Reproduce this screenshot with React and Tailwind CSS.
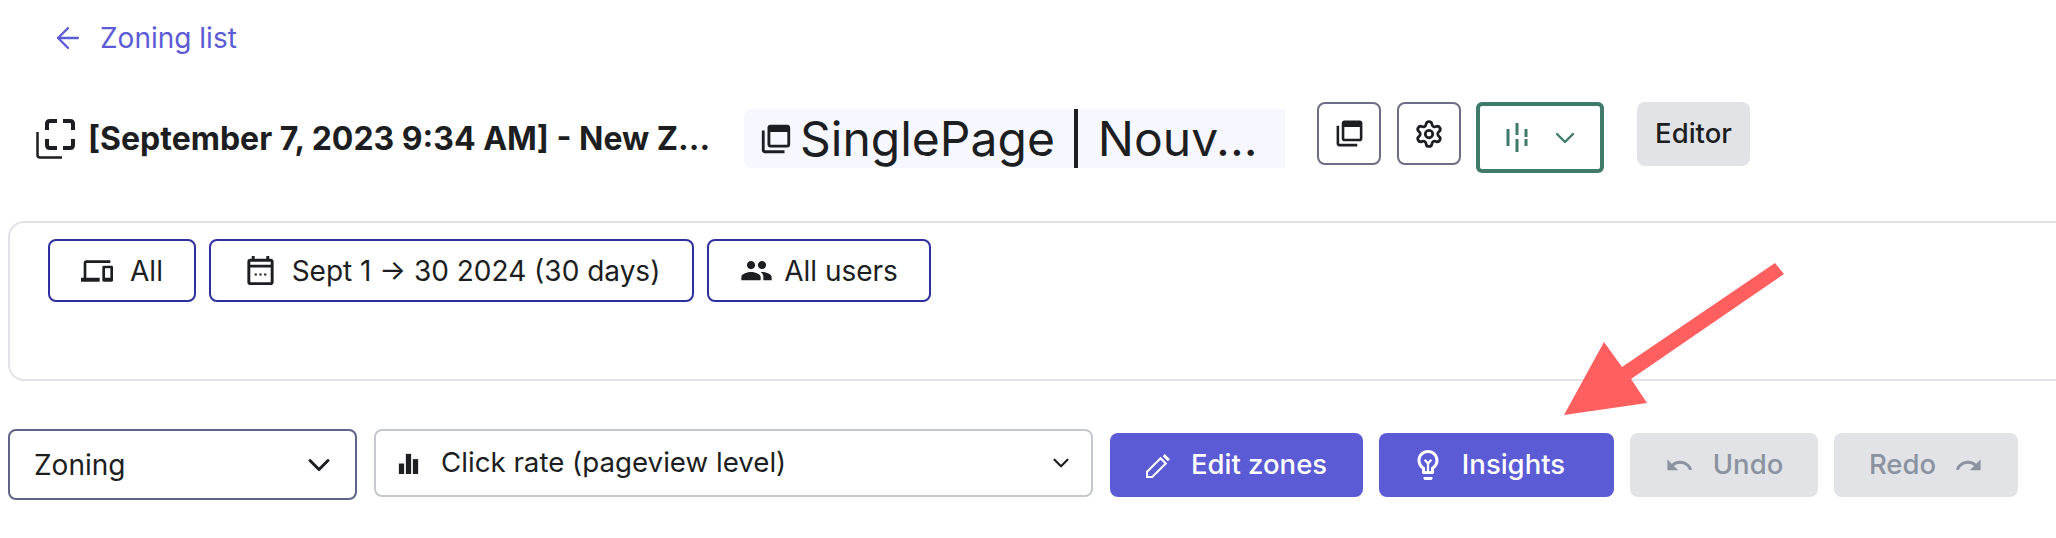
import React from "react";
import { ArrowLeft, ChevronDown, Settings } from "lucide-react";

const Layers = ({ className }) => (
  <svg viewBox="0 0 24 24" fill="currentColor" className={className}>
    <path d="M4 6H2v14c0 1.100.9 2 2 2h14v-2H4V6z" />
    <path fillRule="evenodd" d="M20 2H8c-1.100 0-2 .9-2 2v12c0 1.100.9 2 2 2h12c1.100 0 2-.9 2-2V4c0-1.100-.9-2-2-2zm0 14H8V7h12v9z" />
  </svg>
);

const ZoneIcon = ({ className }) => (
  <svg viewBox="0 0 40 40" fill="none" stroke="currentColor" className={className}>
    <path d="M11 11V5q0-3 3-3h7M27 2h7q3 0 3 3v6M37 20v6q0 3-3 3h-7M21 29h-7q-3 0-3-3v-6" strokeWidth="4" />
    <path d="M1.500 13v23q0 2.500 2.500 2.500h22" strokeWidth="2.500" />
  </svg>
);

const Device = ({ className }) => (
  <svg viewBox="0 0 24 24" fill="currentColor" className={className}>
    <path d="M4 6h18V4H4c-1.100 0-2 .9-2 2v11H0v3h14v-3H4V6zm19 2h-6c-.55 0-1 .45-1 1v10c0 .55.45 1 1 1h6c.55 0 1-.45 1-1V9c0-.55-.45-1-1-1zm-1 9h-4v-7h4v7z" />
  </svg>
);

const Calendar = ({ className }) => (
  <svg viewBox="0 0 24 24" fill="currentColor" className={className}>
    <path d="M19 4h-1V2h-2v2H8V2H6v2H5c-1.100 0-2 .9-2 2v14c0 1.100.9 2 2 2h14c1.100 0 2-.9 2-2V6c0-1.100-.9-2-2-2zm0 16H5V10h14v10zM5 8V6h14v2H5z" />
    <path d="M8 14h1.500v1.500H8zM11.250 14h1.500v1.500h-1.500zM14.500 14H16v1.500h-1.500z" />
  </svg>
);

const People = ({ className }) => (
  <svg viewBox="0 0 24 24" fill="currentColor" className={className}>
    <path d="M16 11c1.660 0 2.990-1.340 2.990-3S17.660 5 16 5s-3 1.340-3 3 1.340 3 3 3zm-8 0c1.660 0 2.990-1.340 2.990-3S9.660 5 8 5 5 6.340 5 8s1.340 3 3 3zm0 2c-2.330 0-7 1.170-7 3.500V19h14v-2.500C15 14.170 10.330 13 8 13zm8 0c-.29 0-.62.020-.97.050 1.160.84 1.970 1.970 1.970 3.450V19h6v-2.500c0-2.330-4.670-3.500-7-3.500z" />
  </svg>
);

const Bars = ({ className }) => (
  <svg viewBox="0 0 24 24" fill="currentColor" className={className}>
    <rect x="1" y="12" width="6" height="12" />
    <rect x="9" y="1" width="6" height="23" />
    <rect x="17" y="7" width="6" height="17" />
  </svg>
);

const Pulse = ({ className }) => (
  <svg viewBox="0 0 22 29" fill="none" stroke="currentColor" strokeWidth="3" className={className}>
    <path d="M2 6v17M11 0v12M11 16v13M20 6v8M20 16v7" />
  </svg>
);

const PencilIcon = ({ className }) => (
  <svg viewBox="0 0 24 24" className={className}>
    <path d="M1 23v-5L14 5l5 5L6 23H1z" fill="none" stroke="currentColor" strokeWidth="2" />
    <path d="M16 3l2-2 5 5-2 2z" fill="currentColor" />
  </svg>
);

const Bulb = ({ className }) => (
  <svg viewBox="0 0 24 24" className={className}>
    <path fill="currentColor" d="M9 21c0 .5.4 1 1 1h4c.6 0 1-.5 1-1v-1H9v1zm3-19C8.100 2 5 5.100 5 9c0 2.400 1.200 4.500 3 5.700V17c0 .5.4 1 1 1h6c.6 0 1-.5 1-1v-2.300c1.800-1.300 3-3.400 3-5.700 0-3.900-3.100-7-7-7zm2 11.700V16h-4v-2.300C8.500 12.700 7 11.200 7 9c0-2.800 2.200-5 5-5s5 2.200 5 5c0 2.200-1.500 3.700-3 4.700z" />
    <path fill="none" stroke="currentColor" strokeWidth="1.500" d="M9.800 8.500L12 11l2.200-2.500M12 11v5" />
  </svg>
);

const UndoIcon = ({ className }) => (
  <svg viewBox="0 0 24 24" fill="currentColor" className={className}>
    <path d="M12.500 8c-2.650 0-5.050.99-6.900 2.600L2 7v9h9l-3.620-3.620c1.390-1.160 3.160-1.880 5.120-1.880 3.540 0 6.550 2.310 7.600 5.500l2.370-.78C21.080 11.030 17.150 8 12.500 8z" />
  </svg>
);

const RedoIcon = ({ className }) => (
  <svg viewBox="0 0 24 24" fill="currentColor" className={className}>
    <path d="M18.400 10.600C16.550 8.990 14.150 8 11.500 8c-4.650 0-8.580 3.030-9.960 7.220L3.900 16c1.050-3.190 4.050-5.500 7.600-5.500 1.950 0 3.730.72 5.120 1.880L13 16h9V7l-3.600 3.600z" />
  </svg>
);

const Pill = ({ icon, children, className }) => (
  <button className={`flex h-[63px] items-center justify-center rounded-[8px] border-2 border-[#2f2f9f] bg-white text-[28px] text-[#1c1e21] ${className}`}>
    {icon}
    {children}
  </button>
);

const Solid = ({ icon, children, className }) => (
  <button className={`flex h-[64px] items-center justify-center rounded-[8px] text-[27.5px] font-medium ${className}`}>
    {icon}
    {children}
  </button>
);

export default function App() {
  return (
    <div className="relative h-[538px] w-full overflow-hidden bg-white font-['Inter',sans-serif] text-[#1c1e21]">
      <a className="mt-[18px] ml-[51px] flex h-[40px] items-center text-[28px] text-[#5b5bd6]">
        <ArrowLeft className="mr-[15px] size-[34px]" strokeWidth={1.600} />
        Zoning list
      </a>

      <div className="mt-[51px] ml-[36px] flex items-start">
        <div className="mt-[10px] flex items-center">
          <ZoneIcon className="size-[40px] shrink-0" />
          <h1 className="ml-[12px] w-[656px] text-[32px] leading-[36px] font-bold whitespace-nowrap">[September 7, 2023 9:34 AM] - New Z...</h1>
        </div>
        <div className="flex h-[59px] w-[541px] items-center rounded-l-[8px] bg-[#f7f7ff] pl-[15px]">
          <Layers className="size-[34px] shrink-0" />
          <span className="ml-[7px] text-[48px] leading-[59px]">SinglePage</span>
          <span className="mr-[20px] ml-[19px] h-[59px] w-[4px] bg-[#1c1e21]" />
          <span className="text-[48px] leading-[59px]">Nouv...</span>
        </div>
        <button className="-mt-[7px] ml-[32px] flex h-[63px] w-[64px] items-center justify-center rounded-[8px] border-2 border-[#6d6d85] bg-white">
          <Layers className="size-[31px]" />
        </button>
        <button className="-mt-[7px] ml-[16px] flex h-[63px] w-[64px] items-center justify-center rounded-[8px] border-2 border-[#6d6d85] bg-white">
          <Settings className="size-[30px]" strokeWidth={2.200} />
        </button>
        <button className="-mt-[7px] ml-[15px] flex h-[71px] w-[128px] items-center gap-[21px] rounded-[6px] border-4 border-[#3f7a6a] bg-white pl-[26px] text-[#3f7a6a]">
          <Pulse className="h-[29px] w-[22px]" />
          <ChevronDown className="size-[32px]" strokeWidth={1.800} />
        </button>
        <button className="-mt-[7px] ml-[33px] flex h-[64px] w-[113px] items-center justify-center rounded-[8px] bg-[#e2e3e7] text-[27.5px] font-medium">
          Editor
        </button>
      </div>

      <div className="mt-[48px] -mr-[40px] ml-[8px] h-[160px] rounded-[16px] border-2 border-[#e2e3e8] pt-[16px] pl-[38px]">
        <div className="flex gap-[13px]">
          <Pill className="w-[148px] gap-[17px]" icon={<Device className="size-[32px]" />}>All</Pill>
          <Pill className="w-[485px] gap-[14px]" icon={<Calendar className="size-[35px]" />}>Sept 1 → 30 2024 (30 days)</Pill>
          <Pill className="w-[224px] gap-[11px]" icon={<People className="size-[33px]" />}>All users</Pill>
        </div>
      </div>

      <div className="mt-[48px] ml-[8px] flex items-start">
        <div className="flex h-[71px] w-[349px] items-center justify-between rounded-[8px] border-2 border-[#5f6488] bg-white pr-[18px] pl-[24px] text-[28px]">
          Zoning
          <ChevronDown className="size-[36px]" strokeWidth={2} />
        </div>
        <div className="ml-[17px] flex h-[68px] w-[719px] items-center rounded-[8px] border-2 border-[#c5c8ce] bg-white pr-[17px] pl-[22px] text-[27.7px]">
          <Bars className="mr-[22px] size-[21px]" />
          Click rate (pageview level)
          <ChevronDown className="ml-auto size-[26px]" strokeWidth={2} />
        </div>
        <div className="mt-[4px] ml-[17px] flex gap-[16px]">
          <Solid className="w-[253px] gap-[20px] bg-[#5b5bd6] text-white" icon={<PencilIcon className="size-[25px]" />}>Edit zones</Solid>
          <Solid className="w-[235px] gap-[16px] bg-[#5b5bd6] pr-[18px] text-white" icon={<Bulb className="size-[36px]" />}>Insights</Solid>
          <Solid className="w-[188px] gap-[19px] bg-[#e2e3e7] text-[#8b92a0]" icon={<UndoIcon className="size-[29px]" />}>Undo</Solid>
          <Solid className="w-[184px] gap-[18px] bg-[#e2e3e7] text-[#8b92a0]">
            Redo
            <RedoIcon className="size-[29px]" />
          </Solid>
        </div>
      </div>

      <svg className="absolute top-0 left-0 h-[538px] w-[2056px]" viewBox="0 0 2056 538" fill="#ff5f5f">
        <polygon points="1775,263 1784,274 1631,379 1647,403 1564,415 1604,342 1622,367" />
      </svg>
    </div>
  );
}
